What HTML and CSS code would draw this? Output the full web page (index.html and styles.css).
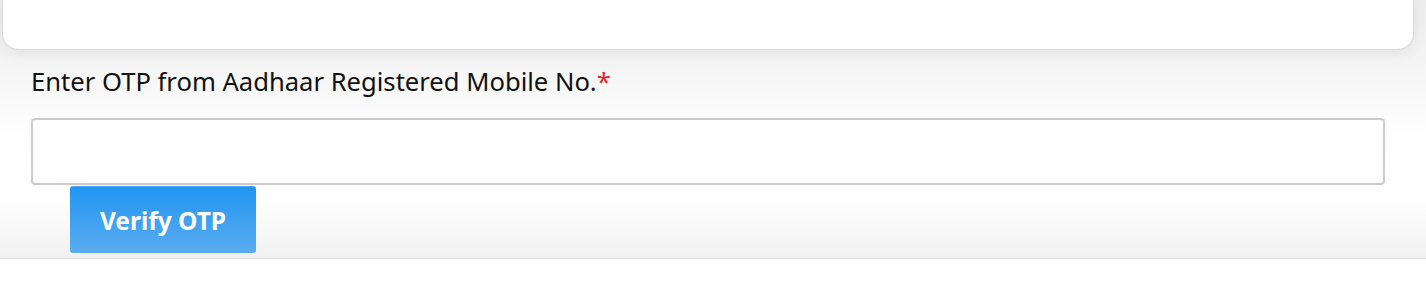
FILE: index.html
```html
<!DOCTYPE html>
<html lang="en">
<head>
<meta charset="utf-8">
<title>Verify OTP</title>
<link rel="stylesheet" href="styles.css">
</head>
<body>
<section class="panel">
  <div class="card"></div>
  <div class="field">
    <label class="label" for="otp">Enter OTP from Aadhaar Registered Mobile No.<span class="req">*</span></label>
    <input class="input" id="otp" type="text">
  </div>
  <div class="actions">
    <button class="btn" type="button">Verify OTP</button>
  </div>
</section>
</body>
</html>
```
FILE: styles.css
```css
html, body {
  margin: 0;
  padding: 0;
  background: #fff;
  font-family: "Noto Sans", "Open Sans", sans-serif;
}
.panel {
  height: 259px;
  box-sizing: border-box;
  border-bottom: 1px solid #dcdcdc;
  background: linear-gradient(#ececec 0px, #f8f8f8 90px, #ffffff 140px, #fefefe 200px, #f1f1f1 258px);
  padding: 0 41px 0 0;
}
.card {
  height: 50px;
  margin-left: 2px;
  margin-right: -29px;
  box-sizing: border-box;
  background: #fff;
  border: 1px solid #dadada;
  border-top: 0;
  border-radius: 0 0 16px 16px;
  box-shadow: 0 4px 14px rgba(0, 0, 0, 0.07);
}
.field {
  padding: 14px 0 0 31px;
  display: flex;
  flex-direction: column;
}
.label {
  font-size: 25.6px;
  line-height: 36px;
  color: #111;
}
.req {
  color: #e8261f;
}
.input {
  margin-top: 18px;
  height: 67px;
  box-sizing: border-box;
  border: 2px solid #cbcbcb;
  border-radius: 4px;
  background: #fff;
  font: inherit;
  font-size: 22px;
  padding: 0 12px;
  outline: none;
}
.actions {
  padding-left: 70px;
  padding-top: 1px;
}
.btn {
  width: 186px;
  height: 67px;
  border: 0;
  border-top: 1px solid #4aa7f5;
  border-radius: 3px;
  background: linear-gradient(#2196f2, #5aabef);
  color: #fff;
  font-family: "Noto Sans", "Open Sans", sans-serif;
  font-weight: 700;
  font-size: 24.5px;
  padding: 0;
  cursor: pointer;
}
```
